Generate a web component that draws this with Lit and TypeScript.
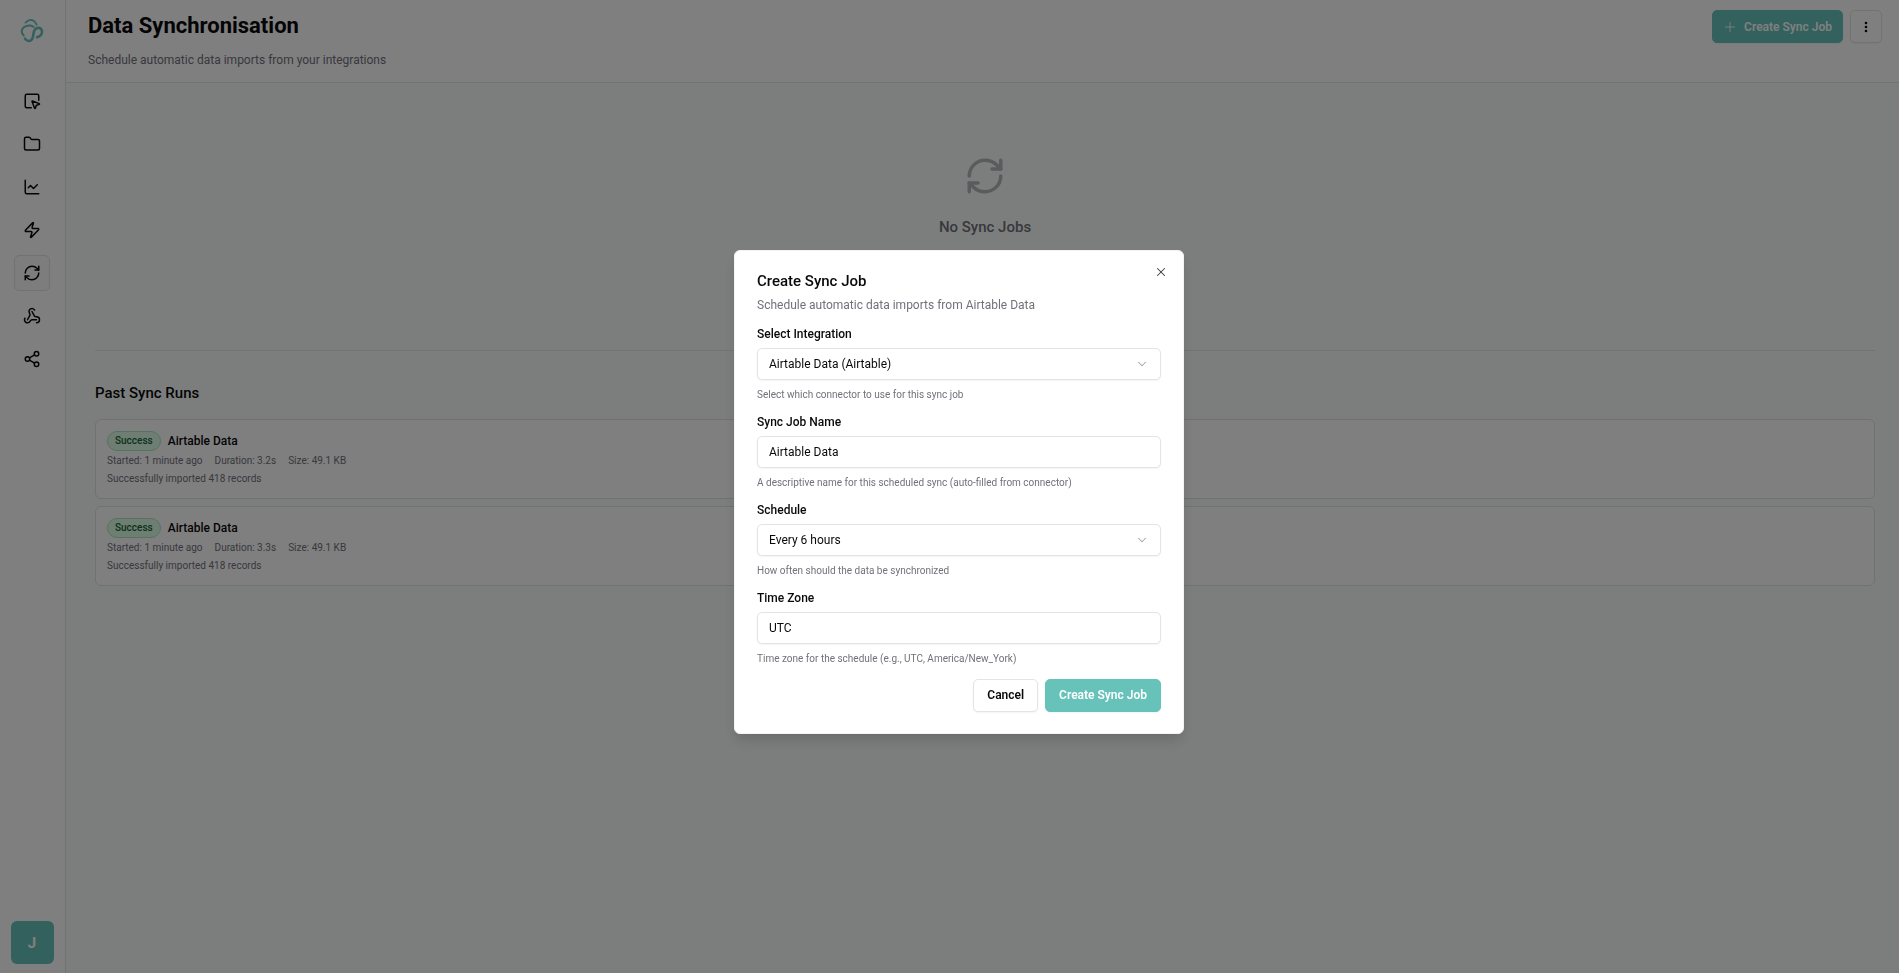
import { LitElement, html, css, svg } from "lit";
import { customElement, state } from "lit/decorators.js";
import { classMap } from "lit/directives/class-map.js";

const paths: Record<string, string[]> = {
  pointer: [
    "M12.034 12.681a.498.498 0 0 1 .647-.647l9 3.5a.5.5 0 0 1-.033.943l-3.444 1.068a1 1 0 0 0-.66.66l-1.067 3.443a.5.5 0 0 1-.943.033z",
    "M21 11V5a2 2 0 0 0-2-2H5a2 2 0 0 0-2 2v14a2 2 0 0 0 2 2h6",
  ],
  folder: [
    "M20 20a2 2 0 0 0 2-2V8a2 2 0 0 0-2-2h-7.9a2 2 0 0 1-1.69-.9L9.6 3.9A2 2 0 0 0 7.93 3H4a2 2 0 0 0-2 2v13a2 2 0 0 0 2 2Z",
  ],
  chart: ["M3 3v16a2 2 0 0 0 2 2h16", "m19 9-5 5-4-4-3 3"],
  zap: [
    "M4 14a1 1 0 0 1-.78-1.63l9.9-10.2a.5.5 0 0 1 .86.46l-1.92 6.02A1 1 0 0 0 13 10h7a1 1 0 0 1 .78 1.63l-9.9 10.2a.5.5 0 0 1-.86-.46l1.92-6.02A1 1 0 0 0 11 14z",
  ],
  refresh: [
    "M3 12a9 9 0 0 1 9-9 9.75 9.75 0 0 1 6.74 2.74L21 8",
    "M21 3v5h-5",
    "M21 12a9 9 0 0 1-9 9 9.75 9.75 0 0 1-6.74-2.74L3 16",
    "M8 16H3v5",
  ],
  webhook: [
    "M18 16.98h-5.99c-1.1 0-1.95.94-2.48 1.9A4 4 0 0 1 2 17c.01-.7.2-1.4.57-2",
    "m6 17 3.13-5.78c.53-.97.1-2.18-.5-3.1a4 4 0 1 1 6.89-4.06",
    "m12 6 3.13 5.73C15.66 12.7 16.9 13 18 13a4 4 0 0 1 0 8",
  ],
  share: [
    "M15 5a3 3 0 1 0 6 0a3 3 0 1 0-6 0",
    "M3 12a3 3 0 1 0 6 0a3 3 0 1 0-6 0",
    "M15 19a3 3 0 1 0 6 0a3 3 0 1 0-6 0",
    "M8.59 13.51 15.42 17.49",
    "M15.41 6.51 8.59 10.49",
  ],
  close: ["M18 6 6 18", "m6 6 12 12"],
  chevron: ["m6 9 6 6 6-6"],
  plus: ["M4 12h16", "M12 4v16"],
};

const icon = (name: string, size: number, weight = 2) => html`
  <svg width=${size} height=${size} viewBox="0 0 24 24" fill="none" stroke="currentColor"
    stroke-width=${weight} stroke-linecap="round" stroke-linejoin="round" aria-hidden="true">
    ${paths[name].map((d) => svg`<path d=${d}></path>`)}
  </svg>`;

const nav = [
  { name: "pointer", label: "Workspace" },
  { name: "folder", label: "Files" },
  { name: "chart", label: "Analytics" },
  { name: "zap", label: "Automations" },
  { name: "refresh", label: "Data Synchronisation" },
  { name: "webhook", label: "Webhooks" },
  { name: "share", label: "Share" },
];

const runs = [
  { name: "Airtable Data", started: "1 minute ago", duration: "3.2s", size: "49.1 KB", records: 418 },
  { name: "Airtable Data", started: "1 minute ago", duration: "3.3s", size: "49.1 KB", records: 418 },
];

@customElement("app-root")
export class AppRoot extends LitElement {
  @state() private open = true;

  static styles = css`
    :host {
      display: block;
      font-family: Roboto, "Noto Sans", sans-serif;
      font-size: 12px;
      line-height: 18px;
      color: #09090b;
    }
    * { box-sizing: border-box; }
    h1, h2, h3, p, ul { margin: 0; padding: 0; }
    button, input, select { font: inherit; color: inherit; }
    svg { display: block; flex: none; }

    .page { display: flex; min-height: 100vh; background: #f9fdfb; }
    .sidebar {
      display: flex;
      flex-direction: column;
      align-items: center;
      justify-content: space-between;
      width: 66px;
      padding: 18px 1px 9px 0;
      background: #fff;
      border-right: 1px solid #dfe7e5;
    }
    .top { display: flex; flex-direction: column; align-items: center; gap: 40px; }
    .brand { color: #67c3ba; }
    .nav { display: flex; flex-direction: column; gap: 7px; list-style: none; }
    .link {
      display: grid;
      place-items: center;
      width: 36px;
      height: 36px;
      border: 1px solid transparent;
      border-radius: 5px;
      color: #09090b;
    }
    .link.active { background: #fafafa; border-color: #e4e4e7; }
    .avatar {
      width: 43px;
      height: 43px;
      padding: 0;
      border: 0;
      border-radius: 6px;
      background: #67c3ba;
      color: #fff;
      font-size: 15px;
      font-weight: 700;
    }

    .main { flex: 1; min-width: 0; }
    .header {
      display: flex;
      justify-content: space-between;
      align-items: flex-start;
      padding: 10px 17px 13px 22px;
      background: #fff;
      border-bottom: 1px solid #e0e6e4;
    }
    .title { font-size: 22px; line-height: 32px; font-weight: 700; }
    .subtitle { margin-top: 9px; color: #71717a; }
    .actions { display: flex; gap: 7px; }
    .btn {
      display: inline-flex;
      align-items: center;
      justify-content: center;
      gap: 7px;
      height: 33px;
      padding: 0 13px;
      border: 1px solid #e4e4e7;
      border-radius: 5px;
      background: #fff;
      font-weight: 600;
      box-shadow: 0 1px 2px rgba(0, 0, 0, 0.05);
    }
    .btn.primary { background: #67c3ba; border-color: #67c3ba; color: #fff; }
    .header .btn.primary { padding: 0 10px; }
    .header .btn.menu { width: 32px; padding: 0; }

    .content { padding: 0 24px 28px 29px; }
    .empty {
      display: flex;
      flex-direction: column;
      align-items: center;
      gap: 21px;
      min-height: 268px;
      padding-top: 72px;
      border-bottom: 1px solid #e4e6e6;
      color: #71717a;
    }
    .empty svg { opacity: 0.5; }
    .empty h2 { font-size: 15px; line-height: 18px; font-weight: 500; }
    .past { margin: 33px 0 17px; font-size: 15px; line-height: 18px; font-weight: 500; }
    .runs { display: flex; flex-direction: column; gap: 7px; list-style: none; }
    .run {
      padding: 11px 11px 10px;
      background: #fff;
      border: 1px solid #e0e4e3;
      border-radius: 6px;
    }
    .runhead { display: flex; align-items: center; gap: 7px; height: 20px; margin-bottom: 1px; }
    .runhead h3 { font-size: 12px; line-height: 20px; font-weight: 500; }
    .badge {
      padding: 0 7px;
      border: 1px solid #a9e9c0;
      border-radius: 10px;
      background: #dcfce7;
      color: #166534;
      font-size: 10px;
      line-height: 18px;
      font-weight: 500;
    }
    .meta { display: flex; gap: 12px; font-size: 10px; line-height: 18px; color: #71717a; }

    .overlay {
      position: fixed;
      inset: 0;
      display: grid;
      place-items: center;
      padding: 10px 0 0 19px;
      background: rgba(0, 0, 0, 0.5);
    }
    .dialog {
      position: relative;
      display: flex;
      flex-direction: column;
      gap: 13px;
      width: 100%;
      max-width: 450px;
      padding: 22px 22px 21px;
      background: #fff;
      border: 1px solid #f4f4f5;
      border-radius: 6px;
      box-shadow: 0 8px 14px -2px rgba(0, 0, 0, 0.15);
    }
    .dialog h2 { font-size: 15px; line-height: 16px; font-weight: 500; }
    .dialog .about { margin-top: 7px; line-height: 18px; color: #71717a; }
    .close {
      position: absolute;
      top: 14px;
      right: 15px;
      padding: 0;
      border: 0;
      background: none;
      opacity: 0.8;
    }
    .field { display: flex; flex-direction: column; }
    .field label { margin-bottom: 7px; line-height: 14px; font-weight: 500; }
    .box { position: relative; }
    .box svg { position: absolute; right: 12px; top: 9px; color: #a1a1aa; pointer-events: none; }
    .control {
      display: block;
      width: 100%;
      height: 32px;
      padding: 0 11px;
      border: 1px solid #e4e4e7;
      border-radius: 5px;
      background: #fff;
      box-shadow: 0 1px 2px rgba(0, 0, 0, 0.05);
      appearance: none;
      outline: none;
    }
    .help { margin-top: 8px; font-size: 10px; line-height: 14px; color: #71717a; }
    .footer { display: flex; justify-content: flex-end; gap: 7px; }
  `;

  private field(id: string, label: string, value: string, help: string, select = false) {
    return html`
      <div class="field">
        <label for=${id}>${label}</label>
        <div class="box">
          ${select
            ? html`<select class="control" id=${id}><option>${value}</option></select>${icon("chevron", 14, 1.8)}`
            : html`<input class="control" id=${id} type="text" .value=${value} />`}
        </div>
        <p class="help">${help}</p>
      </div>`;
  }

  private dialog() {
    return html`
      <div class="overlay">
        <form class="dialog" role="dialog" aria-modal="true" aria-labelledby="dialog-title"
          @submit=${(e: Event) => e.preventDefault()}>
          <button class="close" type="button" aria-label="Close" @click=${() => (this.open = false)}>
            ${icon("close", 14, 1.8)}
          </button>
          <div>
            <h2 id="dialog-title">Create Sync Job</h2>
            <p class="about">Schedule automatic data imports from Airtable Data</p>
          </div>
          ${this.field("integration", "Select Integration", "Airtable Data (Airtable)", "Select which connector to use for this sync job", true)}
          ${this.field("name", "Sync Job Name", "Airtable Data", "A descriptive name for this scheduled sync (auto-filled from connector)")}
          ${this.field("schedule", "Schedule", "Every 6 hours", "How often should the data be synchronized", true)}
          ${this.field("zone", "Time Zone", "UTC", "Time zone for the schedule (e.g., UTC, America/New_York)")}
          <div class="footer">
            <button class="btn" type="button" @click=${() => (this.open = false)}>Cancel</button>
            <button class="btn primary" type="submit">Create Sync Job</button>
          </div>
        </form>
      </div>`;
  }

  render() {
    return html`
      <div class="page">
        <aside class="sidebar">
          <div class="top">
            <svg class="brand" width="24" height="25" viewBox="0 0 24 25" fill="none" stroke="currentColor"
              stroke-linecap="round" stroke-linejoin="round" aria-hidden="true">
              <path stroke-width="1.8" d="M5.4 4.6C7.4 2.6 9 1.6 11.2 1.8C14 2.2 15.4 4 16.6 6.6"></path>
              <path stroke-width="2" d="M13.6 8.8C10.4 7 5.6 7.2 3.2 9.8C0.9 12.5 1.6 15.4 3.8 17.6"></path>
              <path stroke-width="2.6" d="M5 20.6C6.8 23.4 10.2 23.8 12 21.2C14 18 12.8 14 15.2 11.2C17.6 8.6 21.8 10 22 13.6C22.1 16.4 20 18.4 17 19.2"></path>
            </svg>
            <nav aria-label="Main">
              <ul class="nav">
                ${nav.map(
                  (n) => html`<li>
                    <a href="#" aria-label=${n.label} class=${classMap({ link: true, active: n.name === "refresh" })}>
                      ${icon(n.name, 18)}
                    </a>
                  </li>`
                )}
              </ul>
            </nav>
          </div>
          <button class="avatar" type="button" aria-label="Account J">J</button>
        </aside>
        <main class="main">
          <header class="header">
            <div>
              <h1 class="title">Data Synchronisation</h1>
              <p class="subtitle">Schedule automatic data imports from your integrations</p>
            </div>
            <div class="actions">
              <button class="btn primary" type="button" @click=${() => (this.open = true)}>
                ${icon("plus", 14, 1.5)}Create Sync Job
              </button>
              <button class="btn menu" type="button" aria-label="More options">
                <svg width="14" height="14" viewBox="0 0 14 14" fill="currentColor" aria-hidden="true">
                  <circle cx="7" cy="3" r="1.3"></circle>
                  <circle cx="7" cy="7" r="1.3"></circle>
                  <circle cx="7" cy="11" r="1.3"></circle>
                </svg>
              </button>
            </div>
          </header>
          <div class="content">
            <section class="empty">
              ${icon("refresh", 42)}
              <h2>No Sync Jobs</h2>
            </section>
            <h2 class="past">Past Sync Runs</h2>
            <ul class="runs">
              ${runs.map(
                (r) => html`<li class="run">
                  <div class="runhead"><span class="badge">Success</span><h3>${r.name}</h3></div>
                  <div class="meta">
                    <span>Started: ${r.started}</span><span>Duration: ${r.duration}</span><span>Size: ${r.size}</span>
                  </div>
                  <p class="meta">Successfully imported ${r.records} records</p>
                </li>`
              )}
            </ul>
          </div>
        </main>
      </div>
      ${this.open ? this.dialog() : null}
    `;
  }
}
